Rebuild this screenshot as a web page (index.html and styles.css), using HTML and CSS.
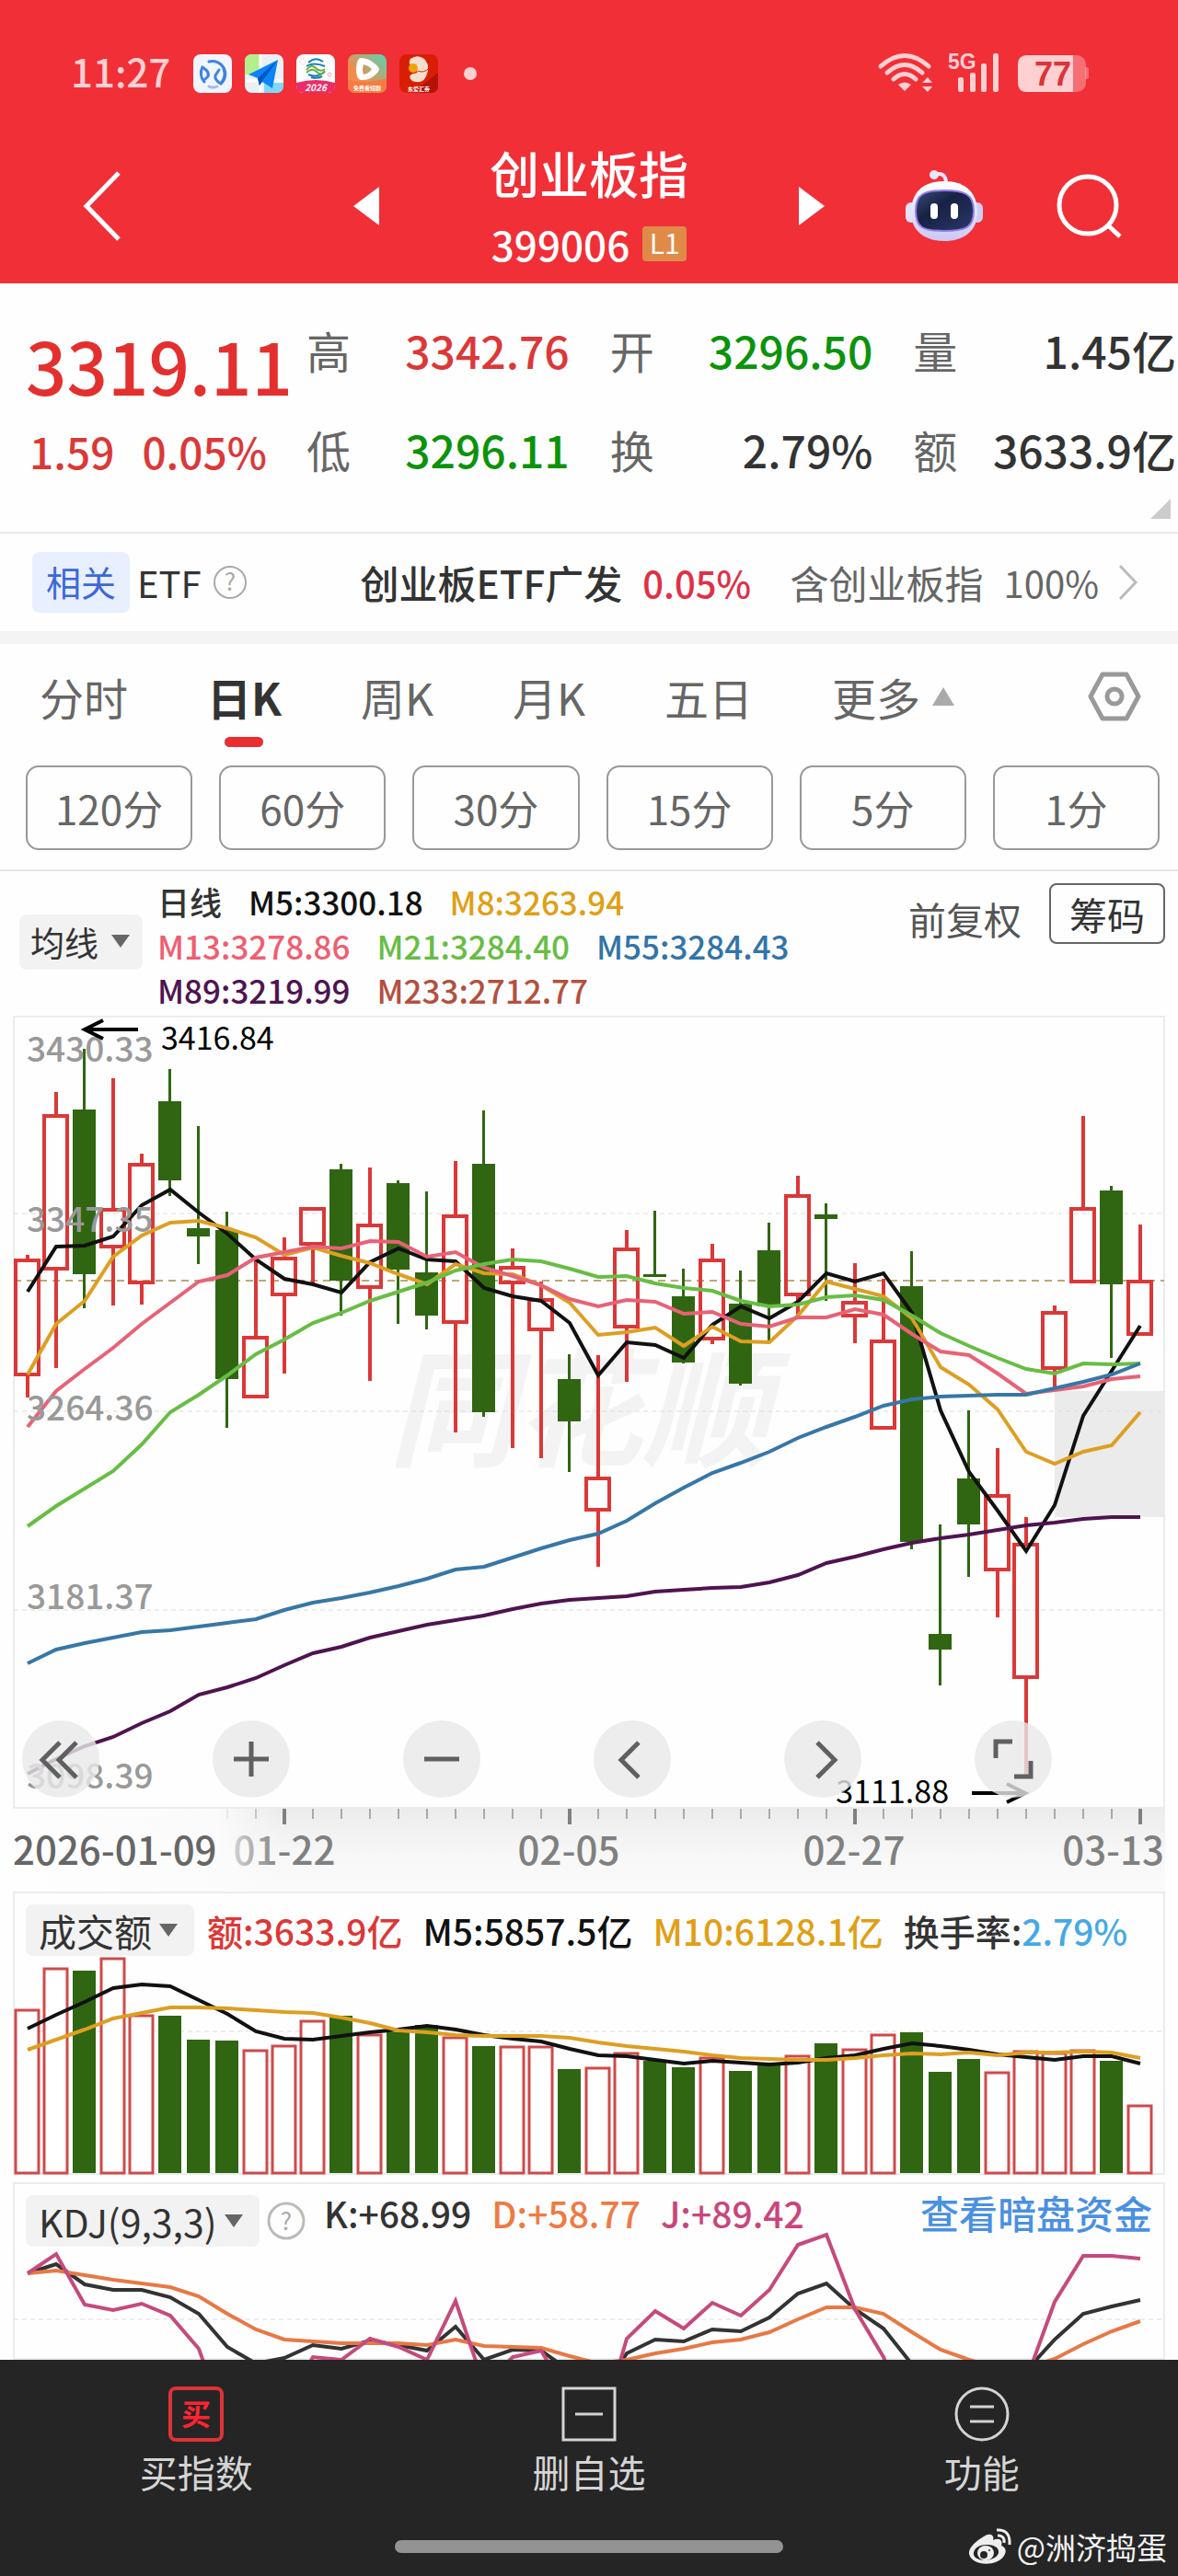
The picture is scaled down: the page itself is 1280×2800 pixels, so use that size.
FILE: index.html
```html
<!DOCTYPE html>
<html lang="zh-CN">
<head>
<meta charset="utf-8">
<meta name="viewport" content="width=device-width, initial-scale=1">
<title>创业板指 399006</title>
<link rel="stylesheet" href="styles.css">
</head>
<body>
<header class="top">
  <div class="status">
    <span class="clock">11:27</span>
    <div class="apps">
      <svg class="app" viewBox="0 0 42 42"><rect width="42" height="42" rx="8" fill="#f1f5fd"/><g fill="none" stroke="#3f83e0" stroke-width="3" stroke-linecap="round"><path d="M12 30A14 14 0 0 1 10 14Q18 19 16 24L13 27M17 8A14 14 0 0 1 30 32Q23 28 24 23L28 17M33 16Q36 24 31 30"/><path d="M17 35Q22 37 26 35" stroke="#9dbdf0"/></g></svg>
      <svg class="app" viewBox="0 0 42 42"><rect width="42" height="42" rx="8" fill="#e9f1f6"/><path d="M8 0H16V22H0V8Q0 0 8 0Z" fill="#b3f08c"/><path d="M21 31H42V34Q42 42 34 42H21Z" fill="#7fd8fa"/><path d="M17 0V42M0 29H42" stroke="#fff" stroke-width="3"/><path d="M36 6L4 22L14 26L16 34L19 30L30 37Z" fill="#0d84f7"/><path d="M36 6L14 26L16 34L19 29Z" fill="#0656c4"/></svg>
      <svg class="app" viewBox="0 0 42 42"><rect width="42" height="42" rx="8" fill="#fff"/><path d="M0 31Q21 25 42 31V34Q42 42 34 42H8Q0 42 0 34Z" fill="#ec2c68"/><g fill="none" stroke-width="2"><path d="M13 9Q21 2 29 8M11 13Q18 8 31 13M13 22Q22 26 31 19M16 25Q22 27 28 24" stroke="#1681b5"/><path d="M11 17Q16 10 21 15T31 16M11 20Q17 14 22 19T31 18" stroke="#62b23c"/></g><circle cx="36" cy="22" r="2" fill="none" stroke="#f5a9bd"/><circle cx="7" cy="8" r="3" fill="none" stroke="#f5b6bd" stroke-dasharray="1 1"/><text x="21" y="40" class="app-text app-year">2026</text></svg>
      <svg class="app" viewBox="0 0 42 42"><defs><linearGradient id="g1" x1="0" y1="1" x2="1" y2="0"><stop offset=".35" stop-color="#f58a4a"/><stop offset="1" stop-color="#54d6b4"/></linearGradient></defs><rect width="42" height="42" rx="8" fill="url(#g1)"/><path d="M0 28Q20 33 42 26V34Q42 42 34 42H8Q0 42 0 34Z" fill="#f57c42"/><path fill-rule="evenodd" d="M13 4Q21 3 29 10Q36 15 33 19Q25 29 14 28Q9 27 9 17T13 4ZM17 11Q15 17 17 22Q23 21 26 16Q22 12 17 11Z" fill="#fff"/><text x="21" y="39" class="app-text">免费看短剧</text></svg>
      <svg class="app" viewBox="0 0 42 42"><rect width="42" height="42" rx="8" fill="#d81f05"/><path d="M42 20L14 42H34Q42 42 42 34Z" fill="#b31307"/><path d="M12 5Q20 -1 28 6Q34 14 29 24Q25 33 14 29Q8 24 15 21Q23 20 17 16Q8 11 12 5Z" fill="#f8dfcd"/><circle cx="15" cy="15" r="5" fill="#eca50a"/><path d="M20 18Q27 21 32 15" stroke="#d81f05" fill="none"/><text x="21" y="40" class="app-text">东爱汇券</text></svg>
    </div>
    <i class="dot"></i>
    <svg class="signals" viewBox="0 0 230 46" fill="#ffd0d2">
      <g fill="none" stroke="#ffd0d2" stroke-width="5" stroke-linecap="round"><path d="M3 15Q29 -8 55 15M10 22Q29 5 48 22M17 29Q29 18 41 29"/></g>
      <path d="M22 35Q29 30 36 35L29 42Z"/><path d="M48 33L54 27L59 33ZM48 37H59L54 43Z"/>
      <text x="76" y="18" class="net">5G</text>
      <rect x="87" y="27" width="6" height="16" rx="2"/><rect x="100" y="22" width="6" height="21" rx="2"/><rect x="112" y="12" width="6" height="31" rx="2"/><rect x="125" y="1" width="6" height="42" rx="2"/>
      <rect x="152" y="3" width="74" height="40" rx="10" opacity=".4"/><rect x="225" y="16" width="4" height="13" rx="2" opacity=".4"/><path d="M162 3H212V43H162Q152 43 152 33V13Q152 3 162 3Z"/>
      <text x="170" y="36" class="charge">77</text>
    </svg>
  </div>
  <nav class="bar">
    <div class="bar-left">
      <button class="plain" aria-label="返回"><svg width="42" height="76" viewBox="0 0 42 76"><path d="M39 2L4 38L39 74" fill="none" stroke="#fff" stroke-width="5"/></svg></button>
      <button class="plain" aria-label="上一个"><svg width="28" height="42" viewBox="0 0 28 42"><path d="M28 0V42L0 21Z" fill="#fff"/></svg></button>
    </div>
    <div class="name">
      <h1>创业板指</h1>
      <div class="code">399006<span class="level">L1</span></div>
    </div>
    <div class="bar-right">
      <button class="plain" aria-label="下一个"><svg width="28" height="42" viewBox="0 0 28 42"><path d="M0 0V42L28 21Z" fill="#fff"/></svg></button>
      <div class="actions">
        <button class="plain" aria-label="助手"><svg width="84" height="80" viewBox="0 0 84 80"><defs><linearGradient id="hd" x1="0" y1="0" x2="0" y2="1"><stop offset="0" stop-color="#fff"/><stop offset="1" stop-color="#c9c8f3"/></linearGradient><linearGradient id="fc" x1="0" y1="0" x2="1" y2="1"><stop offset="0" stop-color="#3c4b73"/><stop offset=".4" stop-color="#172145"/><stop offset="1" stop-color="#2b3968"/></linearGradient></defs><path d="M31 6Q43 2 44 14" fill="none" stroke="#e8e4fa" stroke-width="4"/><circle cx="31" cy="6" r="5" fill="#ece8fb"/><rect x="0" y="36" width="12" height="22" rx="6" fill="#e5e3fb"/><rect x="72" y="36" width="12" height="22" rx="6" fill="#cfcdf3"/><path d="M42 13C66 13 78 26 78 47C78 68 62 78 42 78S6 68 6 47C6 26 18 13 42 13Z" fill="url(#hd)"/><path d="M42 23C64 23 74 27 74 45S66 67 42 67S11 63 11 45S20 23 42 23Z" fill="url(#fc)" stroke="#8f7bea" stroke-width="2"/><rect x="27" y="37" width="8" height="17" rx="4" fill="#fff"/><rect x="49" y="37" width="8" height="17" rx="4" fill="#fff"/></svg></button>
        <button class="plain" aria-label="搜索"><svg width="72" height="72" viewBox="0 0 72 72" fill="none" stroke="#fff" stroke-width="5"><circle cx="34" cy="35" r="31"/><path d="M56 57L69 69"/></svg></button>
      </div>
    </div>
  </nav>
</header>

<main>
  <section class="quote">
    <div class="last">
      <strong>3319.11</strong>
      <div class="change"><span>1.59</span><span>0.05%</span></div>
    </div>
    <dl class="stats">
      <div><dt>高</dt><dd class="up">3342.76</dd></div>
      <div><dt>开</dt><dd class="down">3296.50</dd></div>
      <div><dt>量</dt><dd>1.45亿</dd></div>
      <div><dt>低</dt><dd class="down">3296.11</dd></div>
      <div><dt>换</dt><dd>2.79%</dd></div>
      <div><dt>额</dt><dd>3633.9亿</dd></div>
    </dl>
    <svg class="corner" width="22" height="22" viewBox="0 0 22 22"><path d="M22 0V22H0Z" fill="#ccc"/></svg>
  </section>

  <a class="etf" href="#etf">
    <span class="tag">相关</span><span class="etf-label">ETF</span>
    <svg class="help" width="38" height="38" viewBox="0 0 38 38"><circle cx="19" cy="19" r="17" fill="none" stroke="#aaa" stroke-width="2"/><text x="19" y="28" class="qmark">?</text></svg>
    <span class="fund">创业板ETF广发</span><span class="pct">0.05%</span>
    <span class="hold">含创业板指</span><span class="hold-pct">100%</span>
    <svg class="go" width="24" height="40" viewBox="0 0 24 40"><path d="M3 2L20 20L3 38" fill="none" stroke="#bbb" stroke-width="3"/></svg>
  </a>

  <nav class="tabs">
    <button>分时</button><button class="on">日K</button><button>周K</button><button>月K</button><button>五日</button>
    <button>更多<svg width="26" height="22" viewBox="0 0 26 22"><path d="M13 1L25 21H1Z" fill="#aaa"/></svg></button>
    <button class="gear" aria-label="设置"><svg width="58" height="54" viewBox="0 0 58 54" fill="none" stroke="#999" stroke-width="5" stroke-linejoin="round"><path d="M16 3H42L55 27L42 51H16L3 27Z"/><circle cx="29" cy="27" r="8"/></svg></button>
  </nav>
  <div class="minutes">
    <button>120分</button><button>60分</button><button>30分</button><button>15分</button><button>5分</button><button>1分</button>
  </div>

  <section class="ma">
    <label class="pick"><select aria-label="均线"><option>均线</option></select></label>
    <div class="legend">
      <p><span class="c-dark">日线</span><span class="c-m5">M5:3300.18</span><span class="c-m8">M8:3263.94</span></p>
      <p><span class="c-m13">M13:3278.86</span><span class="c-m21">M21:3284.40</span><span class="c-m55">M55:3284.43</span></p>
      <p><span class="c-m89">M89:3219.99</span><span class="c-m233">M233:2712.77</span></p>
    </div>
    <button class="plain adjust">前复权</button>
    <button class="chips">筹码</button>
  </section>

  <section class="kline">
    <svg id="kline" class="chart" viewBox="14 1104 1252 952">
      <defs>
        <linearGradient id="axisV" x1="0" y1="0" x2="0" y2="1"><stop offset="0" stop-color="#ececec"/><stop offset=".6" stop-color="#f8f8f8"/><stop offset="1" stop-color="#fafafa"/></linearGradient>
        <linearGradient id="axisH" x1="0" y1="0" x2="1" y2="0"><stop offset="0" stop-color="#fefefe"/><stop offset=".76" stop-color="#fcfcfc" stop-opacity=".9"/><stop offset="1" stop-color="#fafafa" stop-opacity="0"/></linearGradient>
      </defs>
    </svg>
    <div class="tools">
      <button aria-label="最左"><svg viewBox="0 0 84 84"><path d="M41 24L22 43L41 62M59 24L40 43L59 62"/></svg></button>
      <button aria-label="放大"><svg viewBox="0 0 84 84"><path d="M42 23V61M23 42H61"/></svg></button>
      <button aria-label="缩小"><svg viewBox="0 0 84 84"><path d="M23 42H61"/></svg></button>
      <button aria-label="左移"><svg viewBox="0 0 84 84"><path d="M49 24L30 43L49 62"/></svg></button>
      <button aria-label="右移"><svg viewBox="0 0 84 84"><path d="M36 24L55 43L36 62"/></svg></button>
      <button aria-label="全屏"><svg viewBox="0 0 84 84"><path d="M23 41V23H41M43 61H61V44"/></svg></button>
    </div>
  </section>

  <section class="panel volume">
    <div class="panel-head">
      <label class="pick"><select aria-label="指标"><option>成交额</option></select></label>
      <span class="c-up">额:3633.9亿</span><span class="c-m5">M5:5857.5亿</span><span class="c-m8">M10:6128.1亿</span><span class="c-dark">换手率:<b>2.79%</b></span>
    </div>
    <svg id="volume" class="chart" viewBox="14 88 1252 238"></svg>
  </section>

  <section class="panel kdj">
    <div class="panel-head">
      <label class="pick"><select aria-label="指标"><option>KDJ(9,3,3)</option></select></label>
      <svg class="help" width="42" height="42" viewBox="0 0 42 42"><circle cx="21" cy="21" r="19" fill="none" stroke="#bbb" stroke-width="3"/><text x="21" y="31" class="qmark">?</text></svg>
      <span class="c-dark">K:+68.99</span><span class="c-d">D:+58.77</span><span class="c-j">J:+89.42</span>
      <a href="#funds">查看暗盘资金</a>
    </div>
    <svg id="kdj" class="chart" viewBox="14 402 1252 123"></svg>
  </section>
</main>

<footer class="bottom">
  <nav>
    <button><svg width="60" height="60" viewBox="0 0 60 60"><rect x="2" y="2" width="56" height="56" rx="6" fill="none" stroke="#dc3338" stroke-width="4"/><text x="30" y="42" class="buy">买</text></svg>买指数</button>
    <button><svg width="60" height="60" viewBox="0 0 60 60" fill="none" stroke="#d4d4d4" stroke-width="3"><path d="M2 2H58V58H2ZM15 30H45"/></svg>删自选</button>
    <button><svg width="60" height="60" viewBox="0 0 60 60" fill="none" stroke="#d4d4d4" stroke-width="3"><circle cx="30" cy="30" r="28"/><path d="M17 22H43M17 38H43"/></svg>功能</button>
  </nav>
  <div class="home"></div>
  <div class="credit">
    <svg width="48" height="42" viewBox="0 0 48 42"><path fill-rule="evenodd" d="M17 10C24 5 29 9 27 14C34 11 38 14 36 20C41 22 42 26 39 31C32 43 4 43 1 29C0 23 8 15 17 10ZM20 19C10 19 5 25 6 30C8 38 30 38 33 28C34 22 28 19 20 19Z" fill="#eee"/><ellipse cx="19" cy="28" rx="9" ry="8" fill="#eee"/><circle cx="17" cy="30" r="4" fill="#252525"/><circle cx="23" cy="25" r="1" fill="#252525"/><path d="M31 3Q46 2 45 19M32 9Q40 9 39 17" fill="none" stroke="#eee" stroke-width="3"/></svg>
    <span>@洲济捣蛋</span>
  </div>
</footer>
<script src="charts.js"></script>
</body>
</html>
```

FILE: styles.css
```css
* { box-sizing: border-box; }
body {
  margin: 0;
  background: #fefefe;
  color: #333;
  font-family: "Noto Sans CJK SC", "Noto Sans", sans-serif;
  font-weight: 500;
}
button, select { font: inherit; color: inherit; margin: 0; }
button { padding: 0; border: 0; background: none; cursor: pointer; }
svg { display: block; flex: none; }
p, h1, dl, dd { margin: 0; }
a { text-decoration: none; color: inherit; }

.top { background: #f12f37; color: #fff; }
.status { display: flex; align-items: center; height: 160px; padding: 0 96px 0 77px; }
.clock { font-size: 42px; line-height: 64px; color: #ffd0d2; width: 133px; margin-top: -6px; }
.apps { display: flex; gap: 14px; }
.app { width: 42px; height: 42px; }
.app-text { font-size: 6px; fill: #fff; text-anchor: middle; font-weight: 700; }
.app-year { font-size: 10px; font-style: italic; }
.dot { width: 14px; height: 14px; border-radius: 50%; background: #ffd0d2; margin-left: 28px; }
.signals { width: 230px; height: 46px; margin-left: auto; overflow: visible; }
.net { font: 700 23px "Liberation Sans", sans-serif; }
.charge { font: 700 36px "Liberation Sans", sans-serif; fill: #dc3338; }

.bar { display: grid; grid-template-columns: 1fr 456px 1fr; align-items: center; height: 148px; }
.bar-left, .bar-right { display: flex; align-items: center; justify-content: space-between; height: 100%; padding-bottom: 20px; }
.bar-left { padding-left: 90px; }
.bar-right { padding-right: 60px; }
.actions { display: flex; align-items: center; gap: 80px; }
.name { display: flex; flex-direction: column; align-items: center; height: 148px; }
h1 { font-size: 54px; line-height: 64px; font-weight: 500; margin-top: -4px; }
.code { display: flex; align-items: center; gap: 14px; font-size: 44px; line-height: 64px; margin-top: 13px; }
.level { width: 48px; height: 38px; line-height: 34px; font-size: 30px; text-align: center; border-radius: 4px; background: #e08a48; font-weight: 400; }

.quote { display: grid; grid-template-columns: 301px 1fr; position: relative; padding: 40px 2px 56px 32px; border-bottom: 2px solid #e9e9e9; }
.last { color: #e3302f; }
.last strong { display: block; font-size: 78px; line-height: 96px; font-weight: 500; margin-left: -4px; }
.change { display: flex; gap: 30px; font-size: 46px; line-height: 64px; margin-top: 14px; color: #db3838; }
.stats { display: grid; grid-template-columns: repeat(3, 1fr); gap: 44px; font-size: 48px; line-height: 64px; align-content: start; }
.stats div { display: flex; justify-content: space-between; white-space: nowrap; }
dt { color: #666; font-weight: 400; }
.up { color: #db3838; }
.down { color: #0b930b; }
.corner { position: absolute; right: 8px; bottom: 14px; }

.etf { display: flex; align-items: center; height: 120px; padding: 0 42px 0 35px; border-bottom: 14px solid #f4f4f4; font-size: 42px; line-height: 64px; }
.tag { background: #e8effe; color: #3b68d8; border-radius: 8px; width: 106px; height: 66px; font-size: 38px; text-align: center; font-weight: 400; }
.etf-label { font-size: 40px; margin: 0 12px 0 8px; font-weight: 400; }
.help { overflow: visible; }
.qmark { font-size: 26px; fill: #aaa; text-anchor: middle; font-weight: 400; }
.fund { margin-left: 123px; }
.pct { font-size: 40px; color: #df3048; margin-left: 22px; }
.hold { margin-left: auto; color: #666; font-weight: 400; }
.hold-pct { font-size: 40px; color: #666; margin-left: 22px; font-weight: 400; }
.go { margin-left: 20px; }

.tabs { display: flex; gap: 86px; height: 132px; padding: 2px 40px 20px 43px; font-size: 48px; font-weight: 400; color: #666; }
.tabs button { display: flex; align-items: center; gap: 12px; }
.tabs .on { position: relative; color: #333; font-weight: 700; }
.tabs .on::after { content: ""; position: absolute; left: 50%; bottom: 0; width: 42px; height: 11px; margin-left: -21px; border-radius: 6px; background: #e82e30; }
.tabs .gear { margin-left: auto; }
.minutes { display: grid; grid-template-columns: repeat(6, 1fr); gap: 29px; padding: 0 20px 21px 28px; border-bottom: 2px solid #e6e6e6; }
.minutes button { height: 92px; border: 2px solid #999; border-radius: 14px; font-size: 44px; font-weight: 400; color: #666; }

.ma { display: flex; align-items: flex-start; height: 157px; padding: 9px 14px 0 21px; }
.pick { position: relative; display: flex; height: 56px; border-radius: 8px; background: #f2f2f2; flex: none; }
.pick select { appearance: none; border: 0; background: none; padding: 0 46px 0 14px; font-size: 41px; line-height: 56px; font-weight: 400; outline: none; }
.pick::after { content: ""; position: absolute; right: 18px; top: 21px; border: 10px solid transparent; border-top: 14px solid #666; border-bottom: 0; pointer-events: none; }
.ma .pick { width: 134px; height: 60px; margin-top: 38px; }
.ma .pick select { font-size: 37px; padding: 0 40px 0 12px; }
.ma .pick::after { right: 14px; top: 22px; }
.legend { margin-left: 16px; font-size: 35px; line-height: 48px; }
.legend p { display: flex; gap: 29px; }
.adjust { margin: 12px 30px 0 auto; font-size: 41px; line-height: 60px; color: #555; font-weight: 400; }
.chips { width: 126px; height: 66px; margin-top: 4px; border: 2px solid #666; border-radius: 8px; font-size: 41px; line-height: 56px; font-weight: 400; }

.c-dark { color: #333; }
.c-up { color: #db3838; }
.c-m5 { color: #111; }
.c-m8 { color: #e09f15; }
.c-m13 { color: #ee5f72; }
.c-m21 { color: #68bd45; }
.c-m55 { color: #3274a8; }
.c-m89 { color: #4f1450; }
.c-m233 { color: #b25040; }
.c-d { color: #ee7a44; }
.c-j { color: #c9467c; }

.kline { position: relative; margin: 0 14px; }
.chart { width: 100%; height: auto; overflow: visible; }
.chart text { font-size: 37px; }
.axis-price { fill: #999; }
.axis-date { fill: #808080; }
.axis-first { fill: #666; }
.chart .axis-date, .chart .axis-first { font-size: 42px; }
.chart .mark { font-size: 34px; font-weight: 400; fill: #000; }
.chart .brand { font-size: 138px; font-style: italic; font-weight: 700; fill: #f3f3f3; }
.tools { position: absolute; left: 10px; right: 123px; bottom: 102px; display: flex; justify-content: space-between; }
.tools button { width: 84px; height: 84px; border-radius: 50%; background: rgba(232, 232, 232, .8); }
.tools path { fill: none; stroke: #606060; stroke-width: 5; }

.panel { margin: 0 14px; box-shadow: inset 0 0 0 2px #ececec; }
.panel-head { display: flex; align-items: center; gap: 22px; height: 70px; padding: 14px 14px 0; font-size: 39px; line-height: 56px; white-space: nowrap; }
.panel-head .pick { margin-right: -8px; }
.panel-head b { color: #45a9e5; font-weight: 500; }
.panel-head a { margin-left: auto; font-size: 42px; color: #4a90e2; }
.volume { margin-bottom: 8px; }
.kdj .panel-head > span, .kdj .panel-head a { margin-top: -18px; }
.kdj .pick { margin-right: -14px; }
.kdj .help { margin-right: -2px; }

.bottom { position: relative; background: #252525; color: #d4d4d4; height: 235px; padding-top: 29px; }
.bottom nav { display: grid; grid-template-columns: repeat(3, 1fr); }
.bottom button { display: flex; flex-direction: column; align-items: center; gap: 5px; font-size: 41px; line-height: 54px; font-weight: 400; }
.buy { font-size: 32px; font-weight: 700; fill: #ff2433; text-anchor: middle; }
.home { width: 33%; height: 14px; margin: 48px auto 0; border-radius: 7px; background: #939393; }
.credit { position: absolute; right: 12px; bottom: 8px; display: flex; align-items: center; gap: 5px; font-size: 33px; line-height: 48px; font-weight: 400; color: #f2f2f2; }
```

FILE: charts.js
```js
const NS = "http://www.w3.org/2000/svg";
const STEP = 31;
const RED = "#db3838", GREEN = "#306612";
const barX = i => 30 + STEP * i;

function add(parent, tag, attrs, text) {
  const el = document.createElementNS(NS, tag);
  for (const k in attrs) el.setAttribute(k, attrs[k]);
  if (text) el.textContent = text;
  parent.appendChild(el);
  return el;
}
function line(svg, values, color, y = v => v) {
  add(svg, "polyline", {
    points: values.map((v, i) => `${barX(i)},${y(v)}`).join(" "),
    fill: "none", stroke: color, "stroke-width": 4
  });
}
function grid(svg, y, color = "#ddd", dash = "5 4", width = 1) {
  add(svg, "line", { x1: 15, x2: 1265, y1: y, y2: y, stroke: color, "stroke-width": width, "stroke-dasharray": dash });
}

// daily candles: [direction, high, body top, body bottom, low]
const candles = [
  ["r",1364,1368,1496,1519],["r",1187,1211,1381,1487],["g",1140,1206,1385,1422],["r",1172,1313,1357,1419],
  ["r",1254,1264,1396,1418],["g",1162,1197,1283,1300],["g",1224,1335,1344,1374],["g",1317,1337,1499,1552],
  ["r",1367,1452,1520,1520],["r",1345,1366,1409,1493],["r",1312,1312,1354,1395],["g",1265,1271,1392,1430],
  ["r",1269,1330,1401,1501],["g",1283,1286,1380,1439],["g",1295,1383,1430,1445],["r",1262,1320,1439,1557],
  ["g",1207,1265,1535,1540],["r",1357,1376,1396,1574],["r",1393,1411,1447,1585],["g",1472,1499,1545,1600],
  ["r",1473,1605,1643,1703],["r",1337,1356,1444,1502],["g",1316,1385,1388,1388],["g",1379,1409,1481,1482],
  ["r",1352,1368,1457,1461],["g",1381,1417,1504,1506],["g",1329,1359,1420,1461],["r",1278,1298,1409,1430],
  ["g",1308,1320,1325,1414],["r",1373,1414,1432,1460],["r",1390,1456,1554,1554],["g",1360,1398,1676,1684],
  ["g",1657,1776,1793,1832],["g",1533,1607,1657,1714],["r",1574,1624,1708,1758],["r",1649,1677,1825,1931],
  ["r",1419,1425,1489,1508],["r",1213,1312,1395,1395],["g",1289,1294,1396,1476],["r",1331,1391,1452,1452]
];
const m5 = [1404,1355,1354,1344,1310,1293,1318,1341,1369,1390,1396,1405,1372,1357,1369,1371,1400,1409,1414,1438,1495,1459,1462,1476,1440,1420,1433,1415,1384,1393,1384,1427,1533,1600,1642,1686,1636,1539,1490,1441];
const m8 = [1494,1439,1414,1366,1343,1329,1327,1335,1345,1364,1356,1365,1373,1385,1396,1374,1384,1385,1397,1416,1451,1448,1443,1463,1442,1458,1459,1430,1393,1401,1409,1433,1486,1505,1532,1578,1591,1578,1571,1535];
const m13 = [1551,1512,1488,1465,1439,1416,1393,1386,1367,1361,1355,1357,1349,1350,1366,1361,1378,1387,1397,1412,1420,1413,1415,1428,1426,1439,1442,1432,1432,1423,1429,1450,1469,1473,1493,1515,1511,1507,1499,1496];
const m21 = [1659,1637,1618,1599,1570,1535,1516,1495,1472,1456,1438,1427,1414,1404,1394,1381,1374,1369,1371,1379,1388,1387,1395,1400,1403,1414,1420,1418,1410,1408,1413,1430,1449,1463,1476,1488,1493,1482,1483,1482];
const m55 = [1808,1793,1786,1780,1774,1772,1768,1764,1760,1750,1742,1737,1731,1724,1716,1706,1703,1693,1683,1674,1667,1653,1634,1617,1601,1590,1578,1563,1551,1540,1528,1521,1518,1517,1516,1516,1509,1502,1494,1482];
const m89 = [1928,1912,1898,1888,1873,1860,1842,1834,1824,1810,1797,1790,1780,1773,1766,1761,1756,1749,1743,1739,1737,1735,1730,1728,1726,1725,1720,1712,1699,1692,1684,1677,1672,1668,1663,1658,1655,1651,1649,1649];

const k = document.getElementById("kline");
add(k, "rect", { x: 15, y: 1105, width: 1250, height: 860, fill: "none", stroke: "#ececec", "stroke-width": 2 });
add(k, "rect", { x: 15, y: 1965, width: 1251, height: 91, fill: "url(#axisV)" });
add(k, "text", { x: 422, y: 1583, class: "brand" }, "同花顺");
add(k, "rect", { x: 1146, y: 1512, width: 120, height: 137, fill: "#ebebeb" });
[1319, 1534, 1750].forEach(y => grid(k, y));
grid(k, 1392, "#b9a878", "8 6", 2);
candles.forEach(([d, hi, top, bot, lo], i) => {
  const x = barX(i);
  if (d === "g") {
    add(k, "rect", { x: x - 2, y: hi, width: 3, height: lo - hi, fill: GREEN });
    add(k, "rect", { x: x - 13, y: top, width: 25, height: bot - top, fill: GREEN });
  } else {
    if (top > hi) add(k, "rect", { x: x - 2, y: hi, width: 4, height: top - hi, fill: RED });
    if (lo > bot) add(k, "rect", { x: x - 2, y: bot, width: 4, height: lo - bot, fill: RED });
    add(k, "rect", { x: x - 13, y: top + 2, width: 25, height: bot - top - 4, fill: "none", stroke: RED, "stroke-width": 4 });
  }
});
line(k, m5, "#111");
line(k, m8, "#dd9f22");
line(k, m13, "#e86276");
line(k, m21, "#68bd45");
line(k, m55, "#3777a6");
line(k, m89, "#4f1450");
[["3430.33", 1154], ["3347.35", 1339], ["3264.36", 1544], ["3181.37", 1749], ["3098.39", 1944]]
  .forEach(([t, y]) => add(k, "text", { x: 29, y, class: "axis-price" }, t));
add(k, "path", { d: "M150 1119H93M112 1109L92 1119L112 1129", fill: "none", stroke: "#000", "stroke-width": 4 });
add(k, "text", { x: 175, y: 1141, class: "mark" }, "3416.84");
add(k, "path", { d: "M1056 1949H1113M1094 1939L1114 1949L1094 1959", fill: "none", stroke: "#000", "stroke-width": 4 });
add(k, "text", { x: 1031, y: 1960, class: "mark", "text-anchor": "end" }, "3111.88");
for (let i = 7; i < 40; i++) {
  const big = i % 10 === 9;
  add(k, "rect", { x: barX(i) - (big ? 2 : 1), y: 1966, width: big ? 4 : 2, height: big ? 17 : 11, fill: big ? "#808080" : "#aaa" });
}
[["01-22", 309], ["02-05", 618], ["02-27", 928]]
  .forEach(([t, x]) => add(k, "text", { x, y: 2027, class: "axis-date", "text-anchor": "middle" }, t));
add(k, "text", { x: 1265, y: 2027, class: "axis-date", "text-anchor": "end" }, "03-13");
add(k, "rect", { x: 15, y: 1966, width: 290, height: 90, fill: "url(#axisH)" });
add(k, "text", { x: 14, y: 2027, class: "axis-first" }, "2026-01-09");

// lower panels share one vertical scale
const y = v => Math.round(v * 1.033);
const v = document.getElementById("volume");
const turnover = [141,98,101,87,147,148,173,174,184,179,153,148,167,166,158,170,180,180,180,204,202,187,196,202,192,206,199,190,177,183,167,166,207,194,207,185,187,184,196,242];
const t5 = [162,147,134,119,115,117,132,146,165,172,173,169,166,163,159,163,168,172,175,183,190,191,195,198,196,197,199,197,193,190,183,177,180,184,189,192,195,191,191,198];
const t10 = [184,173,163,151,145,139,139,140,142,144,145,150,156,164,166,168,169,169,169,171,176,180,183,186,190,193,194,195,195,193,190,188,189,187,190,187,187,186,187,193];
grid(v, y(165));
turnover.forEach((t, i) => {
  const x = barX(i), green = candles[i][0] === "g";
  if (green) add(v, "rect", { x: x - 13, y: y(t), width: 25, height: 324 - y(t), fill: GREEN });
  else add(v, "rect", { x: x - 13, y: y(t) + 1, width: 25, height: 323 - y(t), fill: "#fff", stroke: "#cf4a4a", "stroke-width": 3 });
});
line(v, t5, "#111", y);
line(v, t10, "#dd9f22", y);

const j = document.getElementById("kdj");
grid(j, y(466));
line(j, [417,408,429,435,435,442,460,495,512,506,493,497,488,493,499,473,508,498,499,520,550,501,487,489,476,478,464,439,428,455,475,513,550,580,580,520,487,460,452,445], "#333", y);
line(j, [417,414,419,424,428,432,441,460,476,487,489,491,491,491,493,487,494,495,496,504,512,508,501,497,490,487,479,466,453,453,460,479,498,508,517,517,507,492,478,468], "#e87845", y);
line(j, [417,397,450,456,449,462,497,580,600,560,505,508,486,495,508,446,535,505,499,550,590,486,457,475,448,462,435,387,377,455,505,580,600,600,600,530,447,399,399,402], "#c54a7d", y);
```
